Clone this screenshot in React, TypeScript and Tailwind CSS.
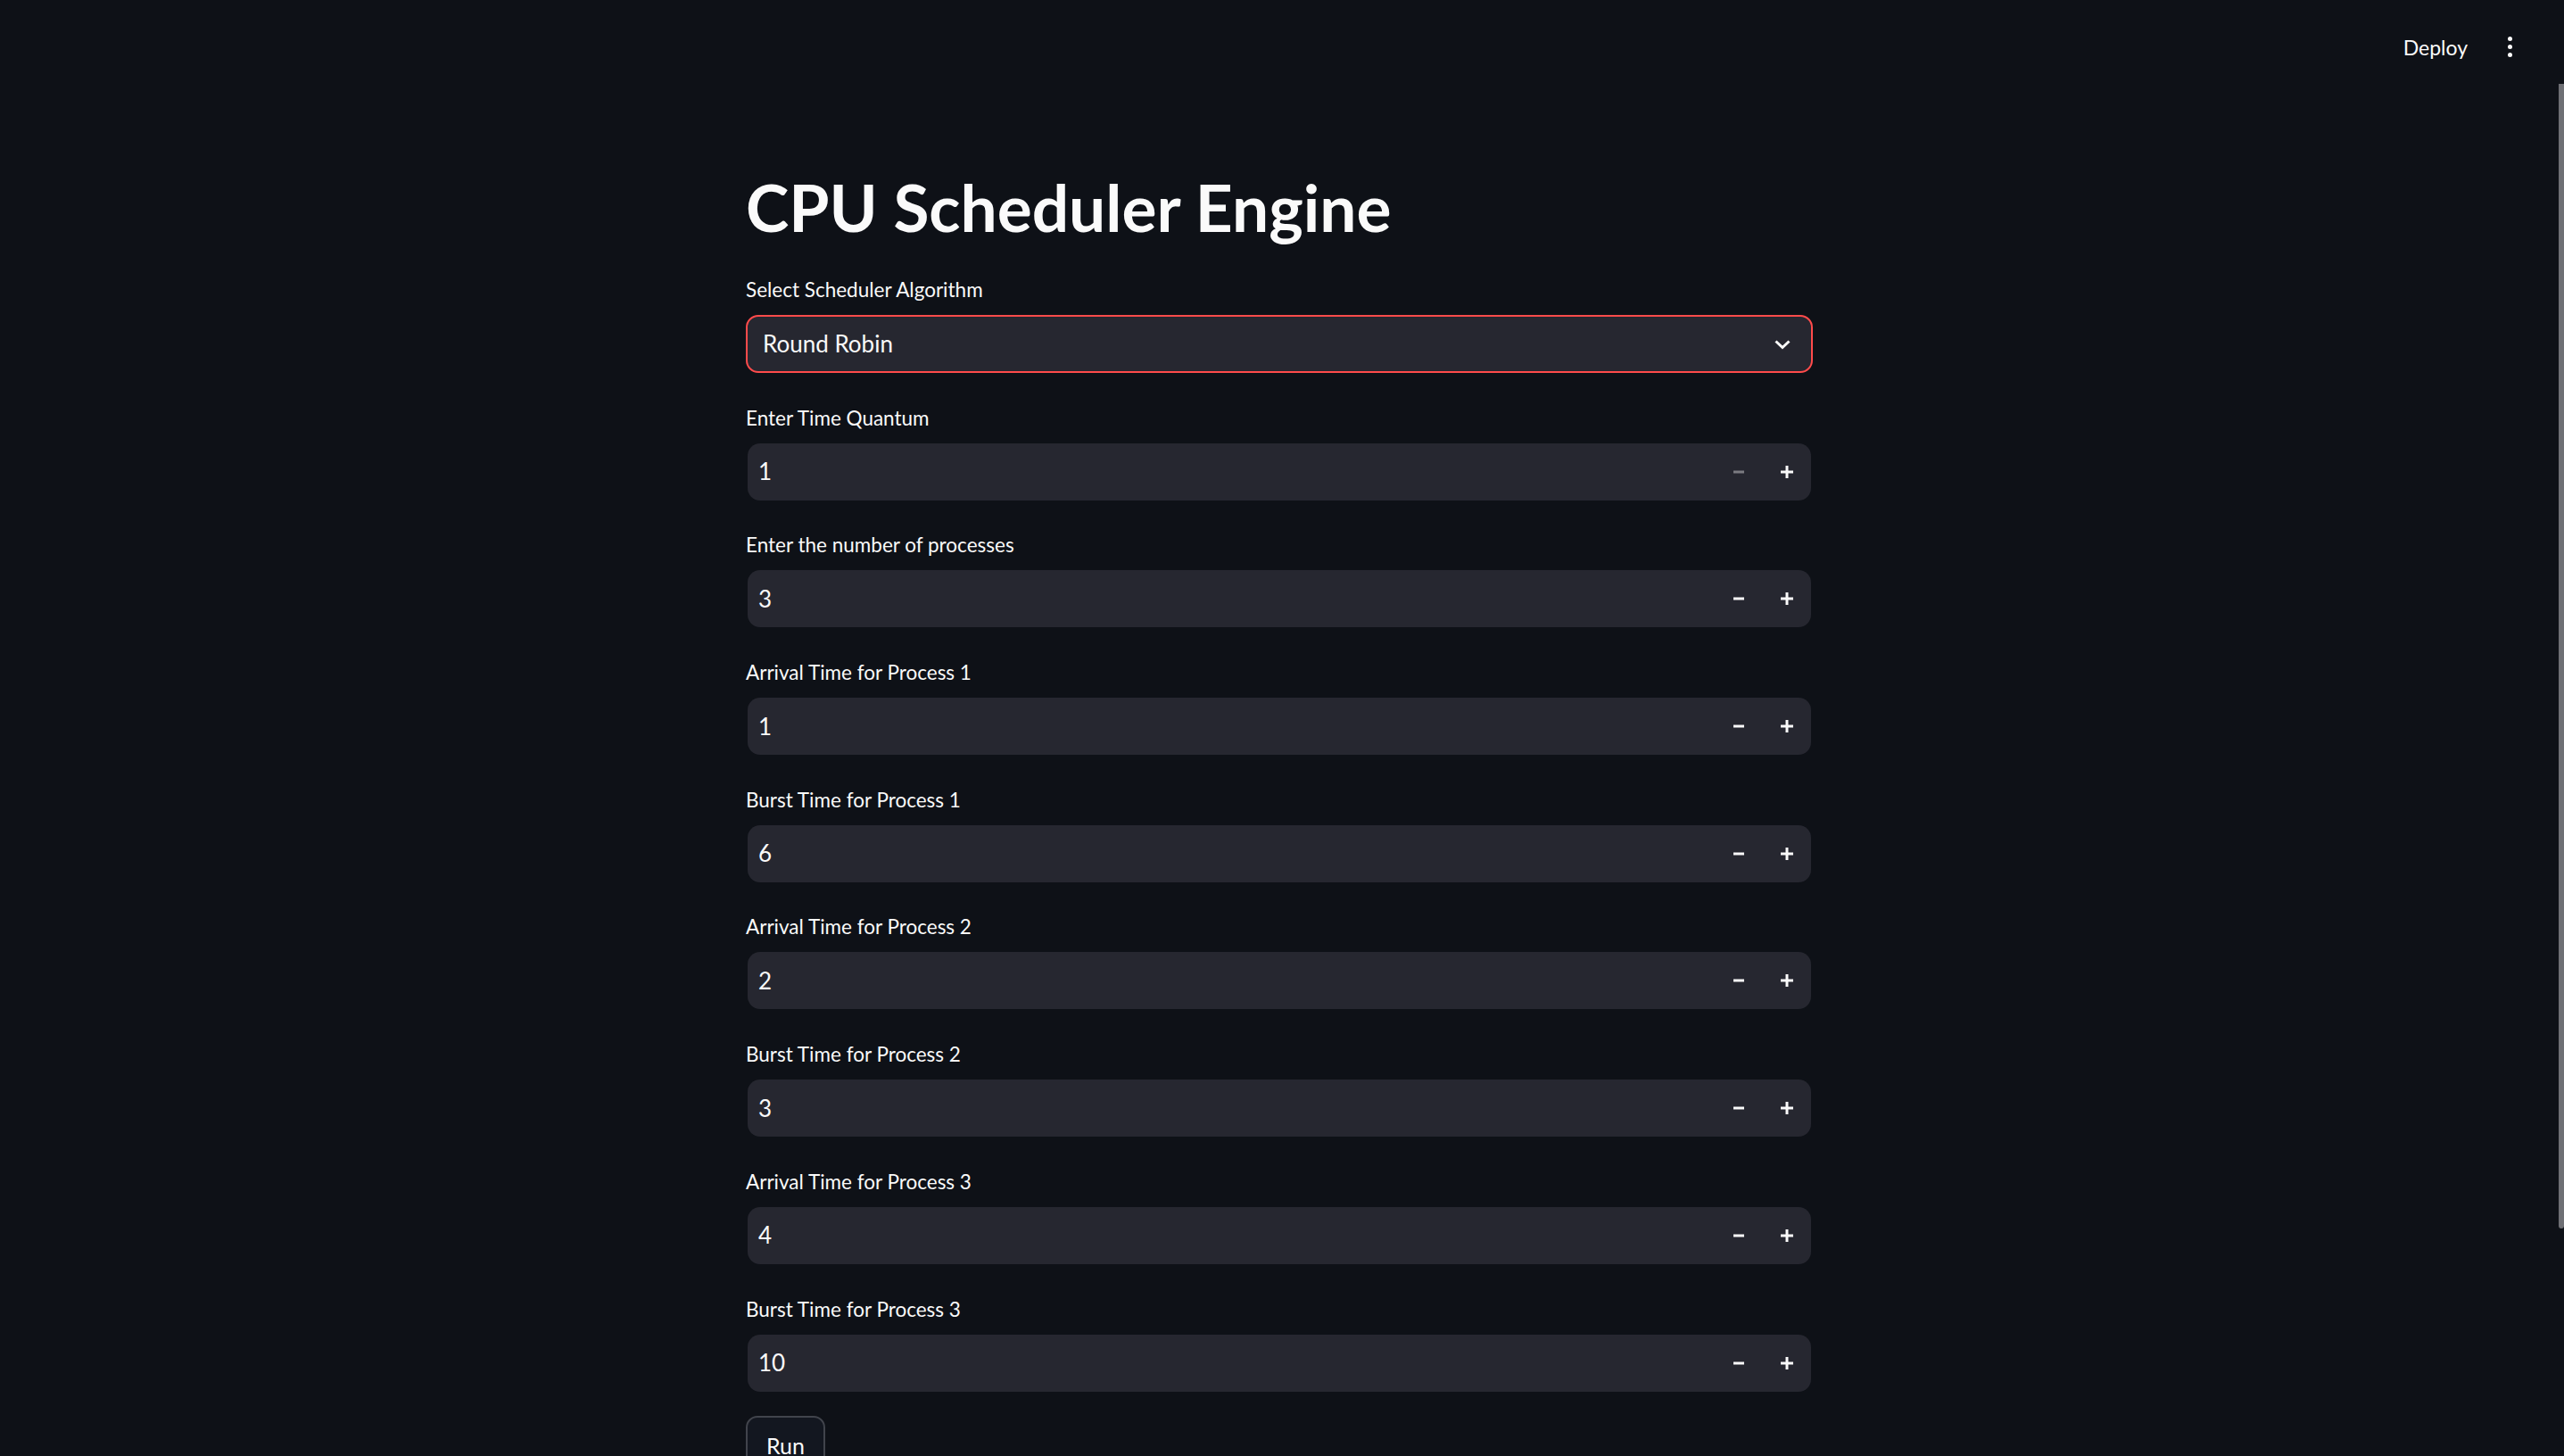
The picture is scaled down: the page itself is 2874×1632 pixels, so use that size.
import { memo } from 'react';

const fields = [
  { label: 'Enter Time Quantum', value: '1', minDisabled: true },
  { label: 'Enter the number of processes', value: '3' },
  { label: 'Arrival Time for Process 1', value: '1' },
  { label: 'Burst Time for Process 1', value: '6' },
  { label: 'Arrival Time for Process 2', value: '2' },
  { label: 'Burst Time for Process 2', value: '3' },
  { label: 'Arrival Time for Process 3', value: '4' },
  { label: 'Burst Time for Process 3', value: '10' },
];

const MinusIcon = ({ disabled }: { disabled?: boolean }) => (
  <svg width="12" height="12" viewBox="0 0 12 12" className={disabled ? 'text-[#7b7b81]' : 'text-[#fafafa]'}>
    <rect x="0" y="4.5" width="12" height="3" fill="currentColor" />
  </svg>
);

const PlusIcon = () => (
  <svg width="14" height="14" viewBox="0 0 14 14" className="text-[#fafafa]">
    <rect x="0" y="5.5" width="14" height="3" fill="currentColor" />
    <rect x="5.5" y="0" width="3" height="14" fill="currentColor" />
  </svg>
);

const FieldLabel = ({ children }: { children: string }) => (
  <div className="mb-[14px] h-[28px] text-[22.5px] leading-[28px] text-[#fafafa]">{children}</div>
);

const NumberField = ({ label, value, minDisabled }: { label: string; value: string; minDisabled?: boolean }) => (
  <div className="flex flex-col">
    <FieldLabel>{label}</FieldLabel>
    <div className="mx-[2px] flex h-[64px] items-center rounded-[14px] bg-[#262730]">
      <div className="flex-1 pl-[12px] text-[26px] leading-[31px] text-[#fafafa]">{value}</div>
      <button className="flex h-full w-[54px] items-center justify-center">
        <MinusIcon disabled={minDisabled} />
      </button>
      <button className="flex h-full w-[54px] items-center justify-center">
        <PlusIcon />
      </button>
    </div>
  </div>
);

const App = () => {
  return (
    <div className="flex h-[1632px] w-full overflow-hidden bg-[#0e1117] font-['Lato',sans-serif] text-[#fafafa]">
      <div className="flex min-w-0 flex-1 flex-col">
        <header className="flex h-[105px] shrink-0 items-center justify-end pr-[35px]">
          <span className="text-[23px] leading-[28px] text-[#fafafa]">Deploy</span>
          <button className="ml-[27px] flex h-[40px] w-[40px] flex-col items-center justify-center gap-[4px]">
            <span className="h-[5px] w-[5px] rounded-full bg-[#fafafa]" />
            <span className="h-[5px] w-[5px] rounded-full bg-[#fafafa]" />
            <span className="h-[5px] w-[5px] rounded-full bg-[#fafafa]" />
          </button>
        </header>

        <main className="mx-auto flex w-[1196px] flex-col pt-[83px]">
          <h1 className="h-[88px] text-[73px] font-bold leading-[88px] text-[#fafafa]">CPU Scheduler Engine</h1>

          <div className="mt-[35px] flex flex-col gap-[36.7px]">
            <div className="flex flex-col">
              <FieldLabel>Select Scheduler Algorithm</FieldLabel>
              <div className="flex h-[65px] items-center rounded-[14px] border-2 border-[#ff4b4b] bg-[#262730] pl-[17px] pr-[20px]">
                <div className="flex-1 text-[26px] leading-[31px] text-[#fafafa]">Round Robin</div>
                <svg width="24" height="24" viewBox="0 0 24 24" fill="none">
                  <path d="M4.5 8.5 12 15.5l7.5-7" stroke="#fafafa" strokeWidth="3" />
                </svg>
              </div>
            </div>

            {fields.map((f) => (
              <NumberField key={f.label} label={f.label} value={f.value} minDisabled={f.minDisabled} />
            ))}
          </div>

          <div className="mt-[27px]">
            <button className="flex h-[70px] w-[89px] items-start justify-center rounded-[13px] border-2 border-[#41444c] bg-[#131720] pt-[16px] text-[25px] leading-[30px] text-[#fafafa]">
              Run
            </button>
          </div>
        </main>
      </div>

      <div className="w-[6px] shrink-0 pt-[94px]">
        <div className="h-[1283px] w-full rounded-b-[3px] bg-[#6e6f74]" />
      </div>
    </div>
  );
};

export default memo(App);
